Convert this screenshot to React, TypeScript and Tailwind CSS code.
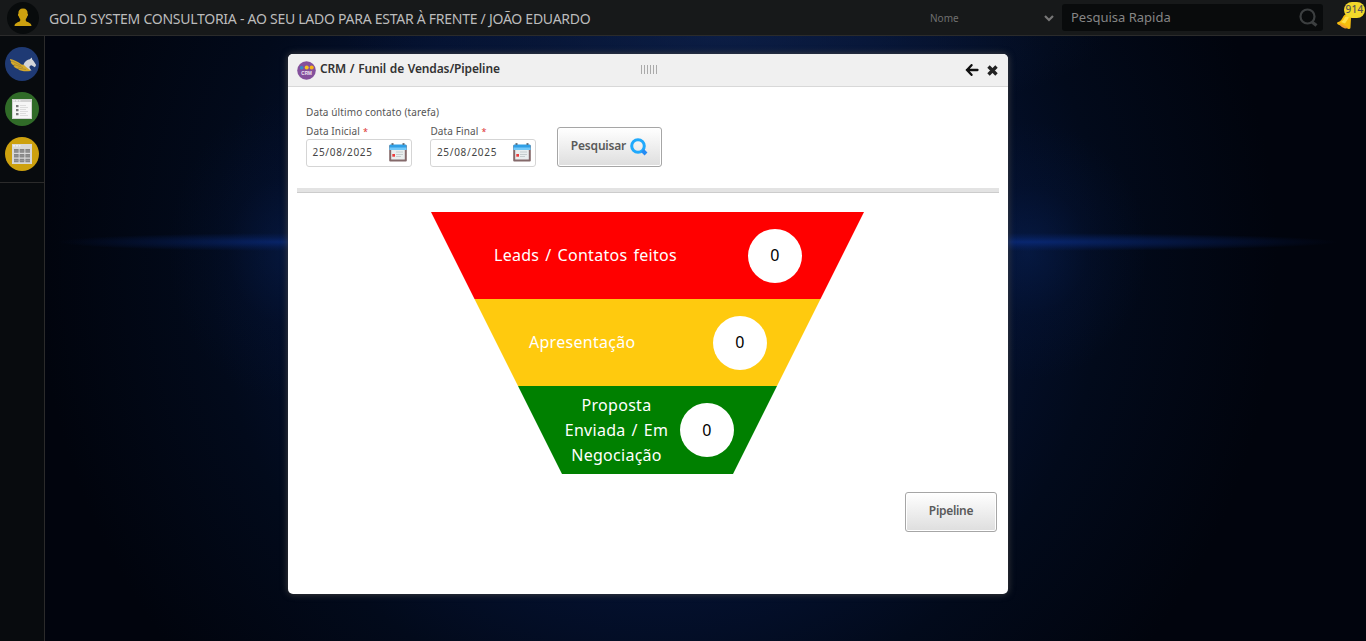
function UserIcon() {
  return (
    <svg className="size-8 shrink-0" viewBox="0 0 32 32">
      <circle cx="16" cy="16" r="16" fill="#080b0c" />
      <path fill="#cda10f" d="M16 6.500c3.200 0 4.800 2 4.600 5.200.7.200.5 2-.3 2.600-.3 1.300-.8 2-1.500 2.700v1.700c.5 1.500 5.700 1.600 5.700 5.300H7.500c0-3.700 5.200-3.800 5.700-5.300V17c-.7-.7-1.200-1.400-1.500-2.700-.8-.6-1-2.400-.3-2.600C11.200 8.500 12.800 6.500 16 6.500z" />
    </svg>
  );
}

function PegasusIcon() {
  return (
    <svg className="size-[34px]" viewBox="0 0 34 34">
      <circle cx="17" cy="17" r="17" fill="#1f3a74" />
      <path fill="#d5a92d" d="M5 12c4 1 8 2.500 11.500 5.500L20 18l5 3.500.5 2.500c-5 .6-9.500.2-12.500-1.500l1-.5c-2.500-.3-4.300-1.300-5.500-2.800l1.500-.2C7.500 18 6 16.500 5.600 14.500l1.200.2C5.500 13.800 5 13 5 12z" />
      <path stroke="#8a7530" strokeWidth=".5" fill="none" d="M7 14l9 4.500M9 17.500l9 3M13 21l8 1.500" />
      <path fill="#d3d5da" d="M18.500 17.500c1.500-3.500 3.800-5 6.300-5.300l2-1.700.4 2.100c1.500 1.200 2.300 3 3.900 5.400l-1.200 2.300-3.500-2.100c-2 .3-2.500 1.800-1.400 3.300l1.600 2.500c-2-1-5-3.300-8.100-6.500z" />
    </svg>
  );
}

function ListIcon() {
  return (
    <svg className="size-[34px]" viewBox="0 0 34 34">
      <circle cx="17" cy="17" r="17" fill="#306b28" />
      <rect x="7" y="7" width="20" height="20" fill="#d2d2d2" />
      <path fill="#fff" d="M8 8h2v1.500H8zM11 8h2v1.500h-2zM14 8h1.500v1.500H14z" opacity=".6" />
      <rect x="8" y="10" width="18" height="16" fill="#f6f6f6" />
      <path fill="#777" d="M11 13h2.500v2.200H11zM11 17h2.500v2.200H11zM11 21h2.500v2.200H11z" />
      <path stroke="#dcdcdc" strokeWidth="1" d="M15 13.500h6M15 15.500h8M15 17.500h6M15 19.500h8M15 21.500h6M15 23.500h8" />
    </svg>
  );
}

function GridIcon() {
  return (
    <svg className="size-[34px]" viewBox="0 0 34 34">
      <circle cx="17" cy="17" r="17" fill="#cda10f" />
      <rect x="7" y="7" width="20" height="20" fill="#d8d8d8" />
      <path fill="#fff" d="M8 8h2v1.500H8zM11 8h2v1.500h-2zM14 8h1.500v1.500H14z" opacity=".6" />
      <path fill="#858585" d="M9 12h4.600v3.800H9zM14.700 12h4.600v3.800h-4.600zM20.400 12H25v3.800h-4.600zM9 17h4.600v3.500H9zM14.700 17h4.600v3.500h-4.600zM20.400 17H25v3.500h-4.600zM9 21.700h4.600v3.500H9zM14.700 21.700h4.600v3.500h-4.600zM20.400 21.700H25v3.500h-4.600z" />
      <path stroke="#a5a5a5" strokeWidth=".5" d="M9 14h16M9 18.800h16M9 23.500h16" />
    </svg>
  );
}

function BellIcon() {
  return (
    <svg className="size-full" viewBox="0 0 30 30">
      <path fill="#f7be0d" d="M9 12.500C11.500 10 15 12 16 15l-.5 9c0 1.800-.8 2.300-2.500 1.800L3 21.500c-1.300-.8-1.200-2.200 0-2.500 3-.5 4-3.500 6-6.500z" />
      <path fill="#ffe04a" d="M10 14c1-1 3-.5 4 .5l-4 6-4-1.500c2-1 3-3 4-5z" />
      <path fill="#f09c31" d="M4 19.800l9 4.700c-2 1.500-3.500 1-5 0-1.500-.3-3.500-2.500-4-4.700z" />
    </svg>
  );
}

function CrmIcon() {
  return (
    <svg className="size-[19px] shrink-0" viewBox="0 0 19 19">
      <circle cx="9.500" cy="9.500" r="9.300" fill="#84509c" />
      <circle cx="4.600" cy="6.700" r="1.800" fill="#318dc7" />
      <circle cx="9.700" cy="6.500" r="2" fill="#f8c51c" />
      <circle cx="14.700" cy="6.500" r="2" fill="#f7b517" />
      <text x="9.600" y="14" textAnchor="middle" fontSize="4.600" fontWeight="700" fill="#f0e8f4" fontFamily="Liberation Sans, sans-serif">CRM</text>
    </svg>
  );
}

function CalendarIcon() {
  return (
    <svg className="h-[19px] w-[18px] shrink-0" viewBox="0 0 18 19">
      <rect x=".2" y="2" width="17.600" height="16.500" rx="1" fill="#84696a" />
      <rect x="2.200" y="6" width="13.600" height="10.500" fill="#e9eeee" />
      <path fill="#2f9fe6" d="M.5 2.500q0-1 1-1h15q1 0 1 1V7H.5z" />
      <path fill="#72c8f8" d="M.5 4.500h17V7H.5z" />
      <path fill="#46525c" d="M2.500.3h2v1.500h-2zM13.500.3h2v1.500h-2z" />
      <path stroke="#c4cccd" d="M7 9h7M7 11.500h7M7 13.500h5" strokeWidth="1" />
      <rect x="3.300" y="11" width="2.700" height="2.700" fill="#ee3c3c" />
    </svg>
  );
}

function DateField({ label }: { label: string }) {
  return (
    <div className="w-[106px]">
      <div className="flex h-[15px] items-center text-[10px] leading-[15px] tracking-[0.12px] text-[#555]">
        <span>{label}</span>
        <span className="ml-[3px] text-[9px] text-[#d33]">*</span>
      </div>
      <div className="flex h-7 items-center justify-between rounded-[3px] border border-[#d5d5d5] bg-white pr-1 pb-px pl-[5.500px] text-[10px] tracking-[0.7px] text-[#444]">
        <span>25/08/2025</span>
        <CalendarIcon />
      </div>
    </div>
  );
}

const buttonStyle =
  "flex h-10 items-center justify-center rounded-[3px] border border-[#a6a6a6] bg-linear-to-b from-white to-[#dedede] pb-0.5 text-[12px] font-semibold text-[#5a5a5a] shadow-[inset_0_0_0_1px_#fff]";

function Count() {
  return <div className="flex size-[54px] shrink-0 items-center justify-center rounded-full bg-white pb-px text-base text-black">0</div>;
}

export default function App() {
  return (
    <div className="flex h-[641px] w-full flex-col overflow-hidden bg-[#01040d] font-['Noto_Sans',sans-serif]">
      <header className="flex h-9 shrink-0 items-center border-b border-[#2b2b2b] bg-[#17191a] pl-[7px]">
        <UserIcon />
        <h1 className="ml-[10px] pt-0.5 text-[14px] tracking-[-0.26px] whitespace-nowrap text-[#bcbcbc]">GOLD SYSTEM CONSULTORIA - AO SEU LADO PARA ESTAR À FRENTE / JOÃO EDUARDO</h1>
        <div className="ml-auto flex items-center">
          <div className="flex w-[132px] items-center justify-between pt-0.5 pr-[8px] text-[10px] text-[#707070]">
            <span>Nome</span>
            <svg className="h-[7px] w-[10px]" viewBox="0 0 10 7"><path d="M1 1l4 4 4-4" fill="none" stroke="#777" strokeWidth="2.200" /></svg>
          </div>
          <div className="flex h-[27px] w-[261px] items-center justify-between rounded-[3px] bg-[#090b0c] pr-[5px] pl-[9px] text-[13px] text-[#858585]">
            <span>Pesquisa Rapida</span>
            <svg className="size-[19px]" viewBox="0 0 19 19"><circle cx="8.500" cy="8.500" r="7" fill="none" stroke="#3c3f40" strokeWidth="2.200" /><path d="M13 14l4.500 3.500" stroke="#3c3f40" strokeWidth="3.200" /></svg>
          </div>
          <div className="relative ml-3 h-[30px] w-[31px]">
            <div className="absolute inset-0 size-[30px]"><BellIcon /></div>
            <span className="absolute -top-px right-px flex h-[16px] w-[21px] items-center justify-center rounded-full bg-[#f1d82a] text-[10px] font-medium tracking-[0.3px] text-[#555]">914</span>
          </div>
        </div>
      </header>
      <div className="flex min-h-0 grow">
        <aside className="w-[45px] shrink-0 border-r border-[#2b2b2b] bg-[#080b0e]">
          <nav className="flex h-[147px] flex-col items-center gap-[11px] border-b border-[#2b2b2b] pt-[11px]">
            <PegasusIcon />
            <ListIcon />
            <GridIcon />
          </nav>
        </aside>
        <main className="grow bg-[radial-gradient(ellipse_310px_9px_at_983px_206px,#0a2e88aa_0%,#08256e66_55%,transparent_100%),radial-gradient(ellipse_230px_9px_at_243px_206px,#0a2e8899_0%,#08256e55_55%,transparent_100%),radial-gradient(ellipse_120px_130px_at_983px_215px,#0a286866_0%,#061b4a33_50%,transparent_100%),radial-gradient(ellipse_120px_150px_at_243px_215px,#0a286855_0%,#061b4a22_50%,transparent_100%),radial-gradient(ellipse_380px_90px_at_680px_0px,#12275588_0%,#0b1c4066_50%,transparent_100%),radial-gradient(ellipse_620px_620px_at_613px_230px,#061638_0%,#041130_50%,#020a1b_72%,#01040d_100%)] pt-[18px] pl-[243px]">
          <section className="h-[540px] w-[720px] overflow-hidden rounded-[5px] bg-white shadow-[0_0_7px_#444]">
            <div className="flex h-[33px] items-center border-b border-[#d8d8d8] bg-[#f0f0f0] pl-[9px]">
              <CrmIcon />
              <h2 className="ml-1 w-[181px] pb-0.5 text-[12px] font-semibold tracking-[-0.13px] [word-spacing:0.7px] whitespace-nowrap text-[#333]">CRM / Funil de Vendas/Pipeline</h2>
              <div className="mb-px ml-[140px] h-[9px] w-4 bg-[repeating-linear-gradient(90deg,#aaa_0_1px,transparent_1px_3px)]" />
              <div className="mr-[10px] ml-auto flex items-center gap-2">
                <svg className="h-3 w-[14px]" viewBox="0 0 14 12"><path d="M12.500 6H2M6.500 1.200L2 6l4.500 4.800" fill="none" stroke="#111" strokeWidth="2.300" strokeLinecap="round" /></svg>
                <svg className="size-[11px]" viewBox="0 0 11 11"><path d="M1.500 1.500l8 8M9.500 1.500l-8 8" stroke="#222" strokeWidth="3.400" /></svg>
              </div>
            </div>
            <div className="px-[9px] pt-[18px]">
              <p className="pl-[9px] text-[10px] leading-[15px] tracking-[0.11px] text-[#555]">Data último contato (tarefa)</p>
              <div className="flex h-[68px] items-start pt-1 pl-[9px]">
                <DateField label="Data Inicial" />
                <div className="ml-[18.400px]"><DateField label="Data Final" /></div>
                <button className={`${buttonStyle} mt-[3px] ml-[20.600px] w-[105px] gap-[4px]`}>
                  <span className="tracking-[-0.2px]">Pesquisar</span>
                  <svg className="mt-0.5 size-[18px]" viewBox="0 0 18 18"><circle cx="8" cy="8" r="6.300" fill="none" stroke="#20a9fc" strokeWidth="3" /><path d="M12.500 12.500l3.500 3.500" stroke="#258cf4" strokeWidth="4" /></svg>
                </button>
              </div>
              <div className="h-[5px] border-b border-[#ccc] bg-[#e3e3e3]" />
            </div>
            <div className="mt-[19px] ml-[143px] h-[262px] w-[433px] text-base leading-[25px] tracking-[0.28px] [word-spacing:1.600px] text-white [clip-path:polygon(0_0,100%_0,302px_100%,131px_100%)]">
              <div className="flex h-[87px] items-center bg-[#ff0000] pl-[63px]">
                <div className="w-[254px]">Leads / Contatos feitos</div>
                <Count />
              </div>
              <div className="flex h-[87px] items-center bg-[#ffca0e] pl-[98px]">
                <div className="w-[184px]">Apresentação</div>
                <Count />
              </div>
              <div className="flex h-[88px] items-center bg-[#008000] pl-[121px]">
                <div className="w-[128px] pl-px text-center">Proposta<br />Enviada / Em<br />Negociação</div>
                <Count />
              </div>
            </div>
            <div className="mt-[18px] flex justify-end pr-[11px]">
              <button className={`${buttonStyle} w-[92px] tracking-[-0.300px]`}>Pipeline</button>
            </div>
          </section>
        </main>
      </div>
    </div>
  );
}
